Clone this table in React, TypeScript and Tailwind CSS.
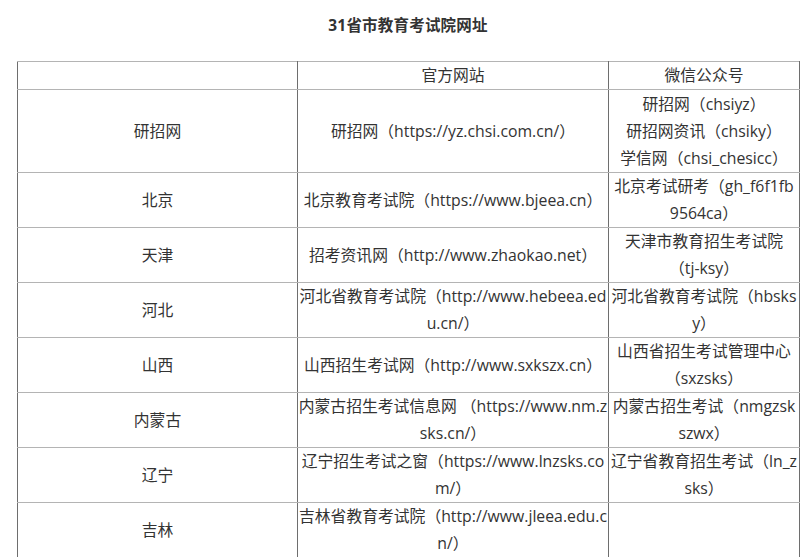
import React from "react"

type Row = {
  province: string
  site: string[]
  wechat: string[]
}

const rows: Row[] = [
  {
    province: "研招网",
    site: ["研招网（https://yz.chsi.com.cn/）"],
    wechat: ["研招网（chsiyz）", "研招网资讯（chsiky）", "学信网（chsi_chesicc）"],
  },
  {
    province: "北京",
    site: ["北京教育考试院（https://www.bjeea.cn）"],
    wechat: ["北京考试研考（gh_f6f1fb", "9564ca）"],
  },
  {
    province: "天津",
    site: ["招考资讯网（http://www.zhaokao.net）"],
    wechat: ["天津市教育招生考试院", "（tj-ksy）"],
  },
  {
    province: "河北",
    site: ["河北省教育考试院（http://www.hebeea.ed", "u.cn/）"],
    wechat: ["河北省教育考试院（hbsks", "y）"],
  },
  {
    province: "山西",
    site: ["山西招生考试网（http://www.sxkszx.cn）"],
    wechat: ["山西省招生考试管理中心", "（sxzsks）"],
  },
  {
    province: "内蒙古",
    site: ["内蒙古招生考试信息网 （https://www.nm.z", "sks.cn/）"],
    wechat: ["内蒙古招生考试（nmgzsk", "szwx）"],
  },
  {
    province: "辽宁",
    site: ["辽宁招生考试之窗（https://www.lnzsks.co", "m/）"],
    wechat: ["辽宁省教育招生考试（ln_z", "sks）"],
  },
  {
    province: "吉林",
    site: ["吉林省教育考试院（http://www.jleea.edu.c", "n/）"],
    wechat: [],
  },
]

function Lines({ lines }: { lines: string[] }) {
  return (
    <>
      {lines.map((l, i) => (
        <div key={i} className="whitespace-nowrap">
          {l}
        </div>
      ))}
    </>
  )
}

const cell = "border border-y-[#b4b4b4] border-x-[#6e6e6e] p-0 text-center align-middle overflow-hidden"

export default function App() {
  return (
    <div
      className="min-h-[557px] bg-white text-[#333] pl-[17px] pr-px pt-[14px]"
      style={{ fontFamily: '"Open Sans", "Noto Sans CJK SC", sans-serif' }}
    >
      <h1 className="text-center text-[15.5px] font-bold leading-[22px] text-[#333] tracking-[0.2px]">
        31省市教育考试院网址
      </h1>

      <table className="mt-[25px] w-[782px] table-fixed border-collapse text-[15.8px] leading-[27px]">
        <colgroup>
          <col className="w-[280px]" />
          <col className="w-[311px]" />
          <col className="w-[191px]" />
        </colgroup>
        <thead>
          <tr className="h-[28px]">
            <th className={`${cell} font-normal`}></th>
            <th className={`${cell} font-normal`}>官方网站</th>
            <th className={`${cell} font-normal`}>微信公众号</th>
          </tr>
        </thead>
        <tbody>
          {rows.map((r, idx) => (
            <tr key={r.province} className={idx === 0 ? "h-[83px]" : "h-[55px]"}>
              <td className={cell}>{r.province}</td>
              <td className={cell}>
                <Lines lines={r.site} />
              </td>
              <td className={cell}>
                <Lines lines={r.wechat} />
              </td>
            </tr>
          ))}
        </tbody>
      </table>
    </div>
  )
}
